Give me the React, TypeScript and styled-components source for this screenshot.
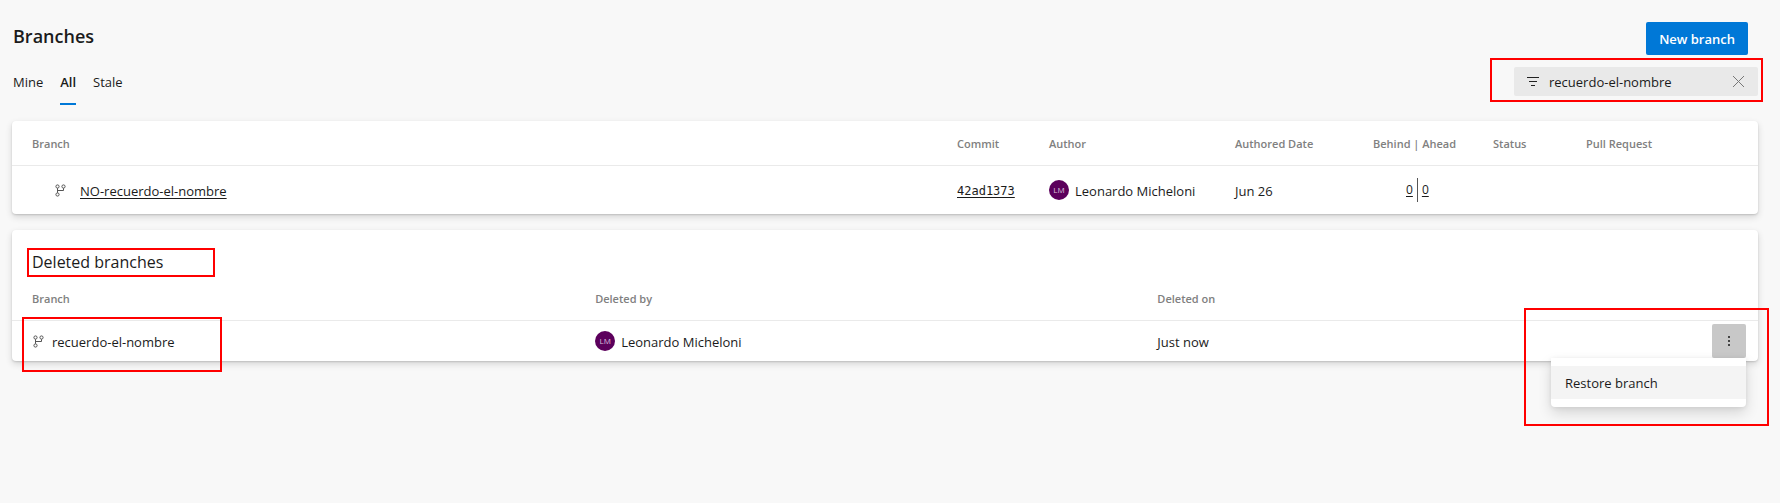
import React from "react";
import styled, { createGlobalStyle, css } from "styled-components";

const GlobalStyle = createGlobalStyle`
  *, *::before, *::after { box-sizing: border-box; }
  body {
    margin: 0;
    background: #f8f8f8;
    color: #1b1b1b;
    font-family: "Open Sans", "Noto Sans", sans-serif;
    font-size: 13px;
    line-height: 20px;
  }
  button, input { font: inherit; color: inherit; }
  a { color: inherit; }
`;

const Page = styled.main`
  padding: 22px 22px 76px 12px;
`;

const TitleBar = styled.header`
  display: flex;
  justify-content: space-between;
  align-items: flex-start;
  padding-right: 10px;
`;

const PageTitle = styled.h1`
  margin: 0;
  padding-left: 1px;
  font-size: 18px;
  line-height: 28px;
  font-weight: 600;
`;

const PrimaryButton = styled.button`
  height: 33px;
  padding: 0 13px;
  border: 0;
  border-radius: 2px;
  background: #0078d7;
  color: #fff;
  font-weight: 600;
`;

const Toolbar = styled.div`
  display: flex;
  justify-content: space-between;
  align-items: flex-start;
  padding: 12px 0 16px;
`;

const Tabs = styled.nav`
  display: flex;
  gap: 17px;
  padding-left: 1px;
`;

const Tab = styled.a<{ $active?: boolean }>`
  height: 38px;
  padding-top: 5px;
  text-decoration: none;
  border-bottom: 2px solid ${(p) => (p.$active ? "#0078d7" : "transparent")};
  ${(p) => p.$active && css`font-weight: 600;`}
`;

const FilterBox = styled.div`
  position: relative;
  display: flex;
  align-items: center;
  width: 244px;
  height: 29px;
  padding: 0 13px;
  gap: 10px;
  border-radius: 2px;
  background: #e9e9e9;
`;

const FilterInput = styled.input`
  flex: 1;
  min-width: 0;
  padding: 0;
  border: 0;
  outline: 0;
  background: transparent;
`;

const IconButton = styled.button`
  display: flex;
  padding: 0;
  border: 0;
  background: transparent;
`;

const Card = styled.section`
  position: relative;
  margin-bottom: 16px;
  border-radius: 4px;
  background: #fff;
  box-shadow: 0 3px 7px rgba(0, 0, 0, 0.14), 0 1px 2px rgba(0, 0, 0, 0.14);
`;

const CardTitle = styled.h2`
  position: relative;
  margin: 0;
  padding: 20px 20px 2px;
  font-size: 16px;
  line-height: 24px;
  font-weight: 400;
`;

const Table = styled.table`
  width: 100%;
  table-layout: fixed;
  border-collapse: separate;
  border-spacing: 0;
`;

const Col = styled.col<{ $width?: string }>`
  width: ${(p) => p.$width ?? "auto"};
`;

const HeadCell = styled.th`
  height: 45px;
  padding: 2px 0 0;
  border-bottom: 1px solid #eaeaea;
  color: #808080;
  font-size: 11px;
  font-weight: 600;
  text-align: left;
  white-space: nowrap;
  &:first-child { padding-left: 20px; }
`;

const Cell = styled.td<{ $height: number; $indent?: number }>`
  position: relative;
  height: ${(p) => p.$height}px;
  padding: 0 0 0 ${(p) => p.$indent ?? 0}px;
  white-space: nowrap;
`;

const Inline = styled.div<{ $gap: number }>`
  display: flex;
  align-items: center;
  gap: ${(p) => p.$gap}px;
`;

const Label = styled.span`
  display: block;
  padding-top: 2px;
`;

const TextLink = styled.a`
  text-underline-offset: 2px;
`;

const CommitLink = styled(TextLink)`
  font-family: "DejaVu Sans Mono", monospace;
  font-size: 12px;
`;

const Avatar = styled.span`
  display: flex;
  align-items: center;
  justify-content: center;
  width: 20px;
  height: 20px;
  border-radius: 50%;
  background: #5c005c;
  color: #d9bfd9;
  font-size: 8px;
  line-height: 8px;
`;

const Counts = styled.div`
  display: flex;
  align-items: center;
  padding-left: 33px;
  font-size: 12px;
`;

const Divider = styled.span`
  width: 1px;
  height: 24px;
  margin: 0 4px;
  background: #555;
`;

const MoreButton = styled.button`
  display: flex;
  align-items: center;
  justify-content: center;
  width: 34px;
  height: 34px;
  padding: 0;
  border: 0;
  border-radius: 2px;
  background: #c8c8c8;
`;

const Menu = styled.div`
  position: absolute;
  top: 37px;
  right: 12px;
  z-index: 1;
  width: 195px;
  padding: 8px 0;
  border-radius: 0 0 4px 4px;
  background: #fff;
  box-shadow: 0 6px 14px rgba(0, 0, 0, 0.14), 0 1px 4px rgba(0, 0, 0, 0.08);
`;

const MenuItem = styled.button`
  display: block;
  width: 100%;
  height: 33px;
  padding: 0 14px;
  border: 0;
  background: #f4f4f4;
  text-align: left;
`;

const Highlight = styled.span<{ $top: number; $left?: number; $right?: number; $width: number; $height: number }>`
  position: absolute;
  z-index: 2;
  top: ${(p) => p.$top}px;
  ${(p) => (p.$right !== undefined ? `right: ${p.$right}px;` : `left: ${p.$left}px;`)}
  width: ${(p) => p.$width}px;
  height: ${(p) => p.$height}px;
  border: 2px solid #f00;
  pointer-events: none;
`;

const BranchIcon = () => (
  <svg width="12" height="13" viewBox="0 0 12 13" fill="none" stroke="#555" aria-hidden="true">
    <circle cx="2.5" cy="2.5" r="1.6" />
    <circle cx="8.5" cy="2.5" r="1.6" />
    <circle cx="2.5" cy="10.5" r="1.6" />
    <path d="M2.5 4.2v4.6M8.5 4.2v2.3h-6" />
  </svg>
);

const FilterIcon = () => (
  <svg width="12" height="10" viewBox="0 0 12 10" stroke="#222" aria-hidden="true">
    <path d="M0 .5h12M2 4.5h8M4 8.5h4" />
  </svg>
);

const CloseIcon = () => (
  <svg width="13" height="13" viewBox="0 0 13 13" stroke="#777" aria-hidden="true">
    <path d="M1 1l11 11M12 1L1 12" />
  </svg>
);

const MoreIcon = () => (
  <svg width="2" height="10" viewBox="0 0 2 10" fill="#444" aria-hidden="true">
    <path d="M0 0h2v2H0zM0 4h2v2H0zM0 8h2v2H0z" />
  </svg>
);

const Person = ({ name, initials }: { name: string; initials: string }) => (
  <Inline $gap={6}>
    <Avatar aria-hidden="true">{initials}</Avatar>
    <Label>{name}</Label>
  </Inline>
);

const branchColumns = [
  { label: "Branch" },
  { label: "Commit", width: "92px" },
  { label: "Author", width: "186px" },
  { label: "Authored Date", width: "138px" },
  { label: "Behind | Ahead", width: "120px" },
  { label: "Status", width: "93px" },
  { label: "Pull Request", width: "172px" },
];

const deletedColumns = [
  { label: "Branch", width: "33.4%" },
  { label: "Deleted by", width: "32.2%" },
  { label: "Deleted on" },
  { label: "", width: "46px" },
];

const TableHead = ({ columns }: { columns: { label: string; width?: string }[] }) => (
  <>
    <colgroup>
      {columns.map((c) => <Col key={c.label} $width={c.width} />)}
    </colgroup>
    <thead>
      <tr>
        {columns.map((c) => <HeadCell key={c.label} scope="col">{c.label}</HeadCell>)}
      </tr>
    </thead>
  </>
);

export default function App() {
  const [filter, setFilter] = React.useState("recuerdo-el-nombre");
  return (
    <>
      <GlobalStyle />
      <Page>
        <TitleBar>
          <PageTitle>Branches</PageTitle>
          <PrimaryButton type="button">New branch</PrimaryButton>
        </TitleBar>
        <Toolbar>
          <Tabs>
            <Tab href="#mine">Mine</Tab>
            <Tab href="#all" $active aria-current="page">All</Tab>
            <Tab href="#stale">Stale</Tab>
          </Tabs>
          <FilterBox>
            <FilterIcon />
            <FilterInput aria-label="Filter branches" value={filter} onChange={(e) => setFilter(e.target.value)} />
            <IconButton type="button" aria-label="Clear filter" onClick={() => setFilter("")}>
              <CloseIcon />
            </IconButton>
            <Highlight $top={-9} $right={-5} $width={273} $height={44} />
          </FilterBox>
        </Toolbar>

        <Card aria-label="Branches">
          <Table>
            <TableHead columns={branchColumns} />
            <tbody>
              <tr>
                <Cell $height={48} $indent={43}>
                  <Inline $gap={13}>
                    <BranchIcon />
                    <Label><TextLink href="#branch">NO-recuerdo-el-nombre</TextLink></Label>
                  </Inline>
                </Cell>
                <Cell $height={48}><CommitLink href="#commit">42ad1373</CommitLink></Cell>
                <Cell $height={48}><Person name="Leonardo Micheloni" initials="LM" /></Cell>
                <Cell $height={48}><Label>Jun 26</Label></Cell>
                <Cell $height={48}>
                  <Counts>
                    <TextLink href="#behind">0</TextLink>
                    <Divider />
                    <TextLink href="#ahead">0</TextLink>
                  </Counts>
                </Cell>
                <Cell $height={48} />
                <Cell $height={48} />
              </tr>
            </tbody>
          </Table>
        </Card>

        <Card aria-label="Deleted branches">
          <CardTitle>
            Deleted branches
            <Highlight $top={18} $left={15} $width={188} $height={29} />
          </CardTitle>
          <Table>
            <TableHead columns={deletedColumns} />
            <tbody>
              <tr>
                <Cell $height={40} $indent={21}>
                  <Inline $gap={7}>
                    <BranchIcon />
                    <Label>recuerdo-el-nombre</Label>
                  </Inline>
                  <Highlight $top={-4} $left={10} $width={200} $height={55} />
                </Cell>
                <Cell $height={40}><Person name="Leonardo Micheloni" initials="LM" /></Cell>
                <Cell $height={40}><Label>Just now</Label></Cell>
                <Cell $height={40}>
                  <MoreButton type="button" aria-label="More options" aria-haspopup="menu" aria-expanded="true">
                    <MoreIcon />
                  </MoreButton>
                  <Menu role="menu">
                    <MenuItem type="button" role="menuitem">Restore branch</MenuItem>
                  </Menu>
                  <Highlight $top={-13} $right={-11} $width={245} $height={118} />
                </Cell>
              </tr>
            </tbody>
          </Table>
        </Card>
      </Page>
    </>
  );
}
